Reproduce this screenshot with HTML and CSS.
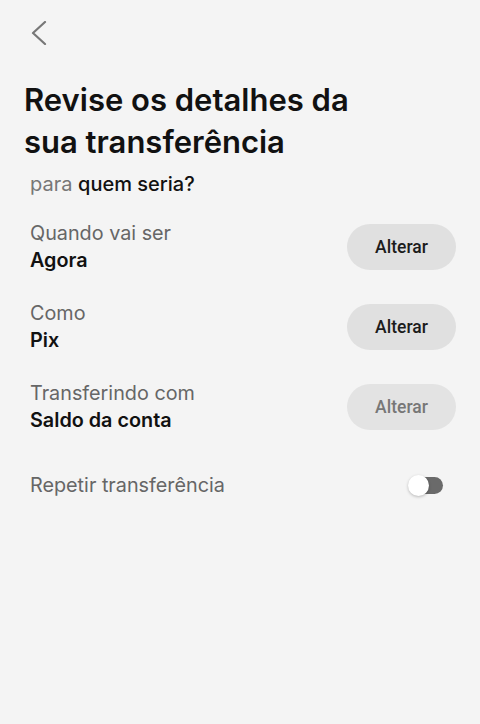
FILE: index.html
```html
<!DOCTYPE html>
<html lang="pt-BR">
<head>
  <meta charset="UTF-8">
  <title>Revise os detalhes da sua transferência</title>
  <link rel="stylesheet" href="styles.css">
</head>
<body>
  <div class="screen">
    <!-- voltar -->
    <button class="back" aria-label="Voltar">
      <svg width="24" height="24" viewBox="0 0 24 24">
        <path d="M18 1 L6 12 L18 23" fill="none" stroke="#777" stroke-width="2.2" stroke-linecap="round" stroke-linejoin="round"/>
      </svg>
    </button>

    <h1 class="title">Revise os detalhes da sua transferência</h1>
    <p class="subtitle"><span class="muted">para</span> <strong>quem seria?</strong></p>

    <!-- detalhes -->
    <div class="details">
      <div class="row">
        <div class="info">
          <div class="label">Quando vai ser</div>
          <div class="value">Agora</div>
        </div>
        <button class="change">Alterar</button>
      </div>
      <div class="row">
        <div class="info">
          <div class="label">Como</div>
          <div class="value">Pix</div>
        </div>
        <button class="change">Alterar</button>
      </div>
      <div class="row">
        <div class="info">
          <div class="label">Transferindo com</div>
          <div class="value">Saldo da conta</div>
        </div>
        <button class="change disabled">Alterar</button>
      </div>
    </div>

    <!-- repetir -->
    <div class="repeat">
      <span class="label">Repetir transferência</span>
      <span class="toggle"><span class="thumb"></span></span>
    </div>
  </div>
</body>
</html>
```

FILE: styles.css
```css
body {
  margin: 0;
  padding: 0;
  background: #f4f4f4;
  font-family: "Inter", "Roboto", sans-serif;
  color: #111;
}
.screen {
  width: 480px;
  height: 724px;
  box-sizing: border-box;
  padding: 19px 24px 0 24px;
}
.back {
  display: block;
  width: 30px;
  height: 30px;
  padding: 0;
  border: none;
  background: none;
}
.title {
  margin: 30px 0 0 0;
  font-size: 31px;
  font-weight: 600;
  line-height: 42px;
  width: 360px;
}
.subtitle {
  margin: 9px 0 0 6px;
  font-size: 20px;
  line-height: 24px;
}
.subtitle strong {
  font-weight: 500;
}
.muted {
  color: #777;
}
.details {
  margin-top: 24px;
  padding-left: 6px;
  display: flex;
  flex-direction: column;
  gap: 26px;
}
.row {
  display: flex;
  align-items: center;
  justify-content: space-between;
}
.label {
  font-size: 19.8px;
  color: #666;
  line-height: 27px;
}
.value {
  font-size: 19.8px;
  font-weight: 600;
  line-height: 27px;
  color: #111;
}
.change {
  width: 109px;
  height: 46px;
  border: none;
  border-radius: 23px;
  background: #e0e0e0;
  font-family: "Roboto", sans-serif;
  font-size: 17.5px;
  font-weight: 500;
  color: #1c1c1c;
}
.change.disabled {
  background: #e3e3e3;
  color: #777;
}
.repeat {
  margin-top: 38px;
  padding-left: 6px;
  display: flex;
  align-items: center;
  justify-content: space-between;
}
.repeat .label {
  color: #666;
}
.toggle {
  position: relative;
  width: 34px;
  height: 17px;
  margin-right: 13px;
  border-radius: 9px;
  background: #6a6a6a;
}
.thumb {
  position: absolute;
  left: -1px;
  top: -2px;
  width: 21px;
  height: 21px;
  border-radius: 50%;
  background: #fff;
  box-shadow: 0 1px 3px rgba(0, 0, 0, 0.25);
}
```
